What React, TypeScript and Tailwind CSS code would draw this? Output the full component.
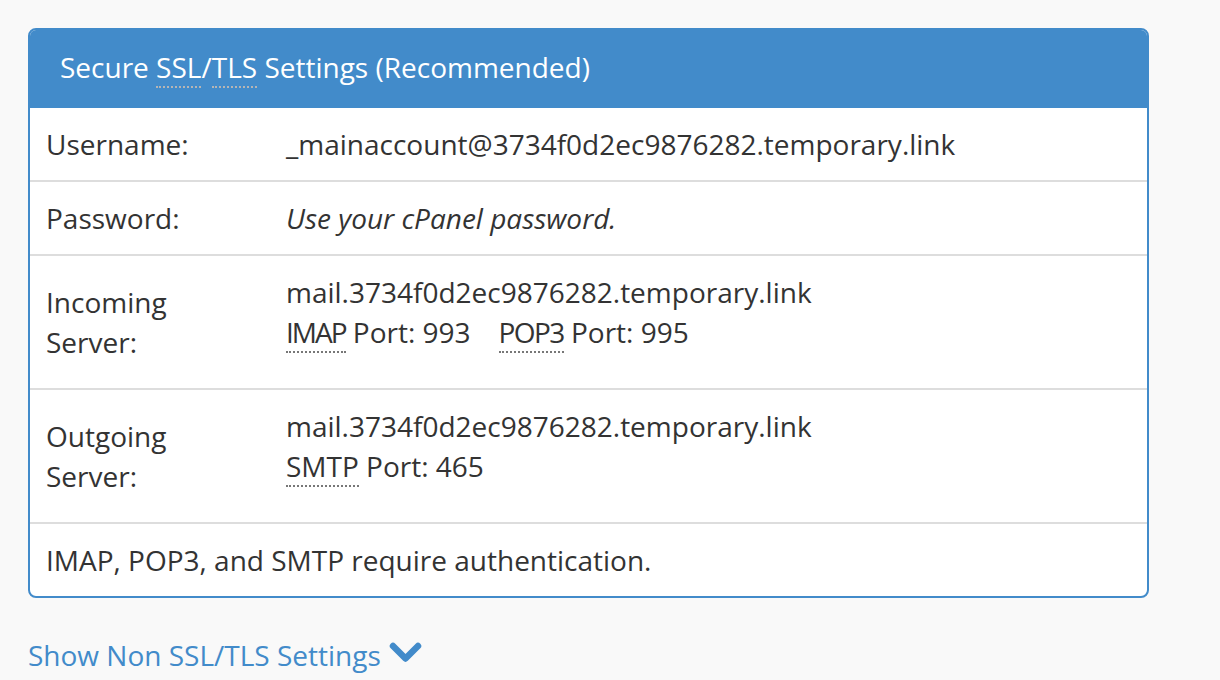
const font = { fontFamily: '"Open Sans", "Noto Sans", sans-serif' };

function Abbr({ children, light, tight }: { children: React.ReactNode; light?: boolean; tight?: string }) {
  return (
    <span
      className={`border-b-2 border-dotted ${light ? "border-[#b5b5b5]" : "border-[#777]"} ${tight ?? ""}`}
    >
      {children}
    </span>
  );
}

function Row({ label, children, tall }: { label: React.ReactNode; children: React.ReactNode; tall?: boolean }) {
  return (
    <div className="grid grid-cols-[240px_1fr] border-t-2 border-[#ddd]">
      <div className="flex items-center px-4 py-4">{label}</div>
      <div className={`px-4 pt-4 ${tall ? "pb-[36px]" : "pb-4"}`}>{children}</div>
    </div>
  );
}

export default function App() {
  return (
    <div
      className="min-h-[680px] bg-[#f9f9f9] px-[28px] pt-[28px] text-[28px] leading-[40px] text-[#333]"
      style={font}
    >
      <div className="w-[1121px] overflow-hidden rounded-lg border-2 border-[#428bca] bg-white">
        <div className="bg-[#428bca] px-[30px] pb-[21px] pt-[17px] text-white">
          Secure <Abbr light>SSL</Abbr>/<Abbr light>TLS</Abbr> Settings (Recommended)
        </div>
        <div className="grid grid-cols-[240px_1fr]">
          <div className="flex items-center px-4 py-4">Username:</div>
          <div className="px-4 py-4">_mainaccount@3734f0d2ec9876282.temporary.link</div>
        </div>
        <Row label="Password:">
          <em>Use your cPanel password.</em>
        </Row>
        <Row
          tall
          label={
            <span>
              Incoming
              <br />
              Server:
            </span>
          }
        >
          <div>mail.3734f0d2ec9876282.temporary.link</div>
          <div>
            <Abbr tight="tracking-[-2px]">IMAP</Abbr> Port: 993<span className="inline-block w-[28px]" />
            <Abbr tight="tracking-[-1.6px]">POP3</Abbr> Port: 995
          </div>
        </Row>
        <Row
          tall
          label={
            <span>
              Outgoing
              <br />
              Server:
            </span>
          }
        >
          <div>mail.3734f0d2ec9876282.temporary.link</div>
          <div>
            <Abbr>SMTP</Abbr> Port: 465
          </div>
        </Row>
        <div className="border-t-2 border-[#ddd] px-4 py-4">
          IMAP, POP3, and SMTP require authentication.
        </div>
      </div>
      <div className="mt-[37px] flex items-center gap-[8px] text-[#428bca]">
        <span>Show Non SSL/TLS Settings</span>
        <svg width="33" height="22" viewBox="0 0 33 22" className="mt-[-4px]">
          <path
            d="M4 4 L16.5 16.5 L29 4"
            fill="none"
            stroke="#428bca"
            strokeWidth="6.5"
            strokeLinecap="round"
            strokeLinejoin="round"
          />
        </svg>
      </div>
    </div>
  );
}
